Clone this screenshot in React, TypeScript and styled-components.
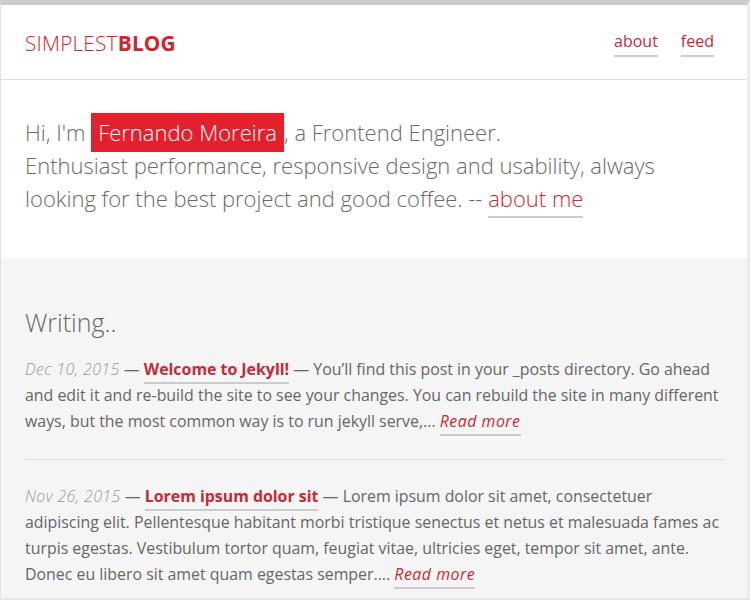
import React from "react";
import styled, { createGlobalStyle } from "styled-components";

const Global = createGlobalStyle`
  html, body { margin: 0; padding: 0; background: #fff; }
  body { font-family: "Open Sans", "Liberation Sans", sans-serif; }
  * { box-sizing: border-box; }
`;

const Frame = styled.div`
  width: 750px;
  height: 600px;
  overflow: hidden;
  border-top: 5px solid #cccccc;
  border-left: 1px solid #e2e2e2;
  border-right: 3px solid #ececec;
  border-bottom: 2px solid #e6e6e6;
  display: flex;
  flex-direction: column;
`;

const Header = styled.header`
  height: 75px;
  flex-shrink: 0;
  background: #fff;
  border-bottom: 1px solid #dddddd;
  display: flex;
  align-items: center;
  justify-content: space-between;
  padding: 0 33px 0 24px;
`;

const Logo = styled.a`
  font-size: 20.8px;
  color: #d5232f;
  text-decoration: none;
  letter-spacing: 0.2px;
  margin-top: 2px;
`;

const LogoLight = styled.span`
  font-weight: 300;
`;

const LogoBold = styled.span`
  font-weight: 700;
`;

const Nav = styled.nav`
  display: flex;
  gap: 23px;
  margin-top: 2px;
`;

const NavLink = styled.a`
  font-size: 16px;
  color: #c62a36;
  text-decoration: none;
  padding-bottom: 3px;
  border-bottom: 2px solid #cccccc;
`;

const Hero = styled.section`
  background: #fff;
  padding: 36px 24px 43px;
  flex-shrink: 0;
`;

const HeroText = styled.p`
  margin: 0;
  font-size: 22px;
  font-weight: 300;
  line-height: 33px;
  color: #6a6a6a;
`;

const Name = styled.span`
  background: #e3202b;
  color: #fff;
  padding: 4px 7px 5px;
  font-weight: 300;
`;

const HeroLink = styled.a`
  color: #c62a36;
  text-decoration: none;
  padding-bottom: 3px;
  border-bottom: 2px solid #cccccc;
`;

const Posts = styled.section`
  background: #f5f5f5;
  flex: 1;
  padding: 46px 22px 0 24px;
`;

const SectionTitle = styled.h2`
  margin: 0 0 16px;
  font-size: 25px;
  font-weight: 300;
  color: #666666;
  line-height: 36px;
`;

const Post = styled.article<{ $last?: boolean }>`
  font-size: 15.9px;
  line-height: 26px;
  color: #666666;
  padding-bottom: ${(p) => (p.$last ? "0" : "25px")};
  margin-bottom: ${(p) => (p.$last ? "0" : "23px")};
  border-bottom: ${(p) => (p.$last ? "none" : "1px solid #dddddd")};
`;

const PostDate = styled.time`
  font-style: italic;
  font-weight: 300;
  letter-spacing: 0.4px;
  color: #999999;
`;

const PostTitle = styled.a`
  font-weight: 700;
  color: #c62a36;
  text-decoration: none;
  padding-bottom: 2px;
  border-bottom: 2px solid #cccccc;
`;

const ReadMore = styled.a`
  font-style: italic;
  letter-spacing: 0.5px;
  color: #c62a36;
  text-decoration: none;
  padding-bottom: 2px;
  border-bottom: 2px solid #cccccc;
`;

const posts = [
  {
    date: "Dec 10, 2015",
    title: "Welcome to Jekyll!",
    excerpt:
      "You’ll find this post in your _posts directory. Go ahead and edit it and re-build the site to see your changes. You can rebuild the site in many different ways, but the most common way is to run jekyll serve,...",
  },
  {
    date: "Nov 26, 2015",
    title: "Lorem ipsum dolor sit",
    excerpt:
      "Lorem ipsum dolor sit amet, consectetuer adipiscing elit. Pellentesque habitant morbi tristique senectus et netus et malesuada fames ac turpis egestas. Vestibulum tortor quam, feugiat vitae, ultricies eget, tempor sit amet, ante. Donec eu libero sit amet quam egestas semper....",
  },
];

export default function App() {
  return (
    <>
      <Global />
      <Frame>
        <Header>
          <Logo href="#">
            <LogoLight>SIMPLEST</LogoLight>
            <LogoBold>BLOG</LogoBold>
          </Logo>
          <Nav>
            <NavLink href="#">about</NavLink>
            <NavLink href="#">feed</NavLink>
          </Nav>
        </Header>
        <Hero>
          <HeroText>
            Hi, I'm <Name>Fernando Moreira</Name>, a Frontend Engineer.
            <br />
            Enthusiast performance, responsive design and usability, always
            looking for the best project and good coffee. --{" "}
            <HeroLink href="#">about me</HeroLink>
          </HeroText>
        </Hero>
        <Posts>
          <SectionTitle>Writing..</SectionTitle>
          {posts.map((p, i) => (
            <Post key={p.title} $last={i === posts.length - 1}>
              <PostDate>{p.date}</PostDate> — <PostTitle href="#">{p.title}</PostTitle> —{" "}
              {p.excerpt} <ReadMore href="#">Read more</ReadMore>
            </Post>
          ))}
        </Posts>
      </Frame>
    </>
  );
}
